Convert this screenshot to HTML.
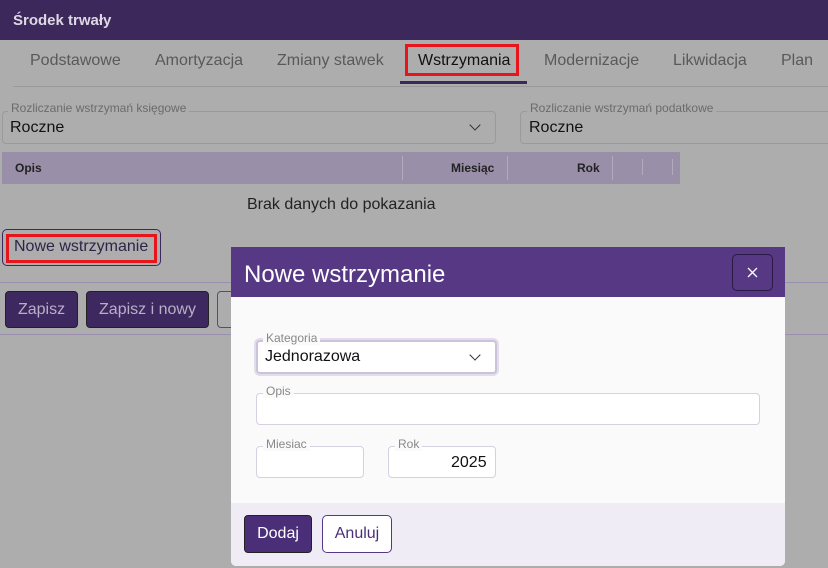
<!DOCTYPE html>
<html><head><meta charset="utf-8"><style>
*{box-sizing:border-box;margin:0;padding:0}
body{width:828px;height:568px;overflow:hidden;position:relative;background:#adadad;font-family:"Liberation Sans",sans-serif}
.a{position:absolute}
.tab{position:absolute;top:52px;font-size:16px;color:#595959}
.lbl{position:absolute;font-size:12px;color:#6b6b6b;padding:0 3px;background:#adadad;line-height:13px}
.fld{position:absolute;border:1px solid #9a9a9a;border-radius:4px}
.chev{position:absolute;width:8px;height:8px;border-right:1.6px solid #333;border-bottom:1.6px solid #333;transform:rotate(45deg)}
.btn{position:absolute;background:#3e2860;border:1px solid #222;border-radius:4px;color:#b8b0c6;font-size:16px;display:flex;align-items:center;justify-content:center}
.ml{position:absolute;font-size:12px;color:#888;padding:0 3px;background:#fafafa;line-height:13px}
.mf{position:absolute;background:#fff;border:1px solid #d6d0e0;border-radius:4px}
</style></head><body>
<div class="a" style="left:0;top:0;width:828px;height:40px;background:#3d285c"></div>
<div class="a" style="left:13px;top:12px;font-size:15px;font-weight:bold;color:#ddd8e4">Środek trwały</div>
<div class="tab" style="left:30px">Podstawowe</div>
<div class="tab" style="left:155px">Amortyzacja</div>
<div class="tab" style="left:277px">Zmiany stawek</div>
<div class="tab" style="left:418px;color:#111">Wstrzymania</div>
<div class="tab" style="left:544px">Modernizacje</div>
<div class="tab" style="left:673px">Likwidacja</div>
<div class="tab" style="left:781px">Plan</div>
<div class="a" style="left:405px;top:44px;width:114px;height:32px;border:3px solid #e8141c"></div>
<div class="a" style="left:400px;top:81px;width:127px;height:3px;background:#3d285c"></div>
<div class="a" style="left:13px;top:86px;width:815px;height:1px;background:#999"></div>

<div class="fld" style="left:2px;top:111px;width:494px;height:33px"></div>
<div class="lbl" style="left:8px;top:102px">Rozliczanie wstrzymań księgowe</div>
<div class="a" style="left:10px;top:119px;font-size:16px;color:#111">Roczne</div>
<div class="chev" style="left:471px;top:121px"></div>
<div class="fld" style="left:520px;top:111px;width:320px;height:33px"></div>
<div class="lbl" style="left:527px;top:102px">Rozliczanie wstrzymań podatkowe</div>
<div class="a" style="left:529px;top:119px;font-size:16px;color:#111">Roczne</div>

<div class="a" style="left:2px;top:152px;width:678px;height:32px;background:#9a8fa8"></div>
<div class="a" style="left:15px;top:161px;font-size:12px;font-weight:bold;color:#222">Opis</div>
<div class="a" style="left:451px;top:161px;font-size:12px;font-weight:bold;color:#222">Miesiąc</div>
<div class="a" style="left:577px;top:161px;font-size:12px;font-weight:bold;color:#222">Rok</div>
<div class="a" style="left:402px;top:156px;width:1px;height:24px;background:#b3abbd"></div>
<div class="a" style="left:507px;top:156px;width:1px;height:24px;background:#b3abbd"></div>
<div class="a" style="left:612px;top:156px;width:1px;height:24px;background:#b3abbd"></div>
<div class="a" style="left:642px;top:159px;width:1px;height:16px;background:#b3abbd"></div>
<div class="a" style="left:672px;top:159px;width:1px;height:16px;background:#b3abbd"></div>
<div class="a" style="left:247px;top:196px;font-size:16px;color:#222">Brak danych do pokazania</div>

<div class="a" style="left:2px;top:229px;width:159px;height:37px;border:1px solid #3d285c;border-radius:5px"></div>
<div class="a" style="left:6px;top:234px;width:151px;height:29px;border:3px solid #e8141c"></div>
<div class="a" style="left:14px;top:238px;font-size:16px;color:#2e2448">Nowe wstrzymanie</div>
<div class="a" style="left:0;top:282px;width:828px;height:1px;background:#9a8fb0"></div>
<div class="btn" style="left:5px;top:291px;width:73px;height:37px">Zapisz</div>
<div class="btn" style="left:86px;top:291px;width:123px;height:37px">Zapisz i nowy</div>
<div class="a" style="left:217px;top:291px;width:40px;height:37px;border:1px solid #5a4a78;border-radius:4px"></div>
<div class="a" style="left:0;top:334px;width:828px;height:1px;background:#9a8fb0"></div>

<div class="a" style="left:231px;top:247px;width:554px;height:319px;background:#fafafa;border-radius:0 0 5px 5px;overflow:hidden">
 <div class="a" style="left:0;top:0;width:554px;height:50px;background:#563885"></div>
 <div class="a" style="left:13px;top:14px;font-size:24px;color:#fff">Nowe wstrzymanie</div>
 <div class="a" style="left:501px;top:7px;width:41px;height:37px;border:1px solid #2a1a44;border-radius:5px"></div>
 <svg class="a" style="left:516px;top:20px" width="11" height="11" viewBox="0 0 11 11"><path d="M1 1L10 10M10 1L1 10" stroke="#fff" stroke-width="1.3"/></svg>
 <div class="a" style="left:0;top:256px;width:554px;height:63px;background:#f0ecf6"></div>
 <div class="mf" style="left:25px;top:93px;width:241px;height:34px;border:2px solid #cbc3da;box-shadow:0 0 0 2px #e2dcec"></div>
 <div class="ml" style="left:32px;top:85px">Kategoria</div>
 <div class="a" style="left:34px;top:101px;font-size:16px;color:#111">Jednorazowa</div>
 <div class="chev" style="left:240px;top:104px"></div>
 <div class="mf" style="left:25px;top:146px;width:504px;height:32px"></div>
 <div class="ml" style="left:32px;top:138px">Opis</div>
 <div class="mf" style="left:25px;top:199px;width:108px;height:32px"></div>
 <div class="ml" style="left:32px;top:191px">Miesiac</div>
 <div class="mf" style="left:157px;top:199px;width:108px;height:32px"></div>
 <div class="ml" style="left:164px;top:191px">Rok</div>
 <div class="a" style="left:220px;top:207px;font-size:16px;color:#111">2025</div>
 <div class="btn" style="left:13px;top:268px;width:68px;height:38px;background:#4a2f78;color:#fff">Dodaj</div>
 <div class="a" style="left:91px;top:268px;width:70px;height:38px;border:1px solid #563885;border-radius:5px;background:#fff;color:#4a2f78;font-size:16px;display:flex;align-items:center;justify-content:center">Anuluj</div>
</div>
</body></html>
